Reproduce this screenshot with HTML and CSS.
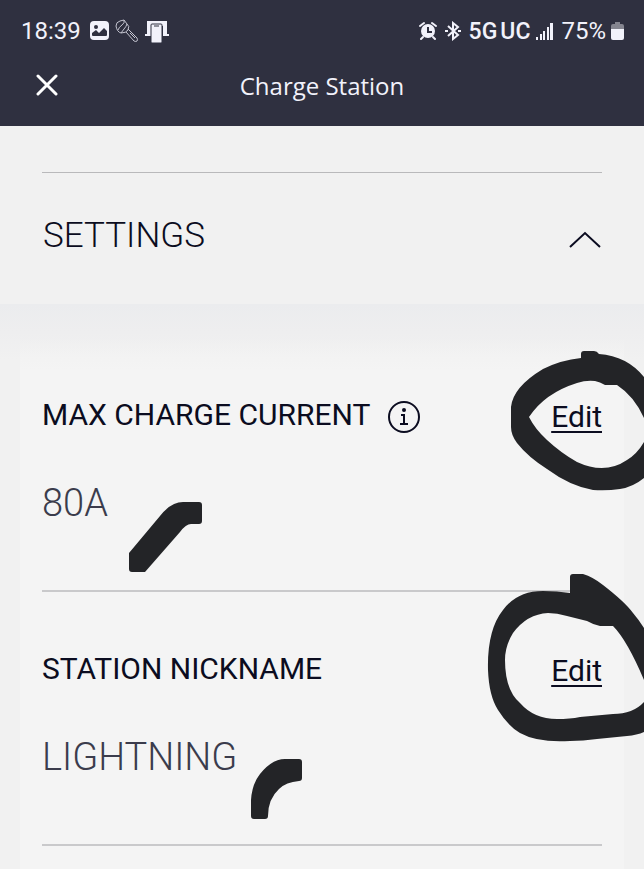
FILE: index.html
```html
<!DOCTYPE html>
<html lang="en">
<head>
    <meta charset="UTF-8">
    <meta name="viewport" content="width=device-width, initial-scale=1.0">
    <title>Charge Station</title>
    <link rel="stylesheet" href="styles.css">
</head>
<body>
    <header class="top">
        <div class="status-bar">
            <div class="status-group">
                <span class="clock">18:39</span>
                <svg width="19" height="20" viewBox="0 0 19 20">
                    <rect width="19" height="19" rx="4" fill="#f2f2fb"/>
                    <circle cx="6" cy="6" r="2" fill="#2f3040"/>
                    <path d="M2 14v-2l4-3 3 3 5-5 3 3v4q0 1-1 1H3q-1 0-1-1z" fill="#2f3040"/>
                </svg>
                <svg width="24" height="24" viewBox="0 0 24 24" fill="none" stroke="#c3c3cf" stroke-width="1">
                    <path d="M1 7q0-4 4-5l4-1 3 4q3 2 1 6-2 3-7 3-4-1-5-7z"/>
                    <path d="M9 1q1 3-2 5t-4 5M12 5q-1 3-3 5l-3 4M13 10l9 9q1 2 0 3t-3 0l-8-9M15 14l5 5"/>
                </svg>
                <svg width="24" height="24" viewBox="0 0 24 24">
                    <path d="M2 2h20v13h2v2h-6V7H6v10H0v-2h2z" fill="#f2f2fb"/>
                    <rect x="6" y="5" width="11" height="19" rx="1" fill="#f2f2fb" stroke="#2f3040"/>
                    <path d="M9 7h5" stroke="#2f3040"/>
                </svg>
            </div>
            <div class="status-group">
                <svg width="18" height="20" viewBox="0 0 18 20">
                    <circle cx="9" cy="10" r="7" fill="#f2f2fb"/>
                    <path d="M1 5l4-3M17 5l-4-3M4 16l-2 2M14 16l2 2" stroke="#f2f2fb" stroke-width="2" stroke-linecap="round"/>
                    <path d="M9 6v5h4" fill="none" stroke="#2f3040" stroke-width="2"/>
                </svg>
                <svg class="bluetooth" width="16" height="20" viewBox="0 0 16 20" fill="none" stroke="#f2f2fb" stroke-width="2">
                    <path d="M3 5l10 9-5 4V2l5 4-10 9"/>
                    <path d="M0 10h3M13 10h3"/>
                </svg>
                <span class="network"><span>5G</span><span>UC</span></span>
                <svg width="17" height="20" viewBox="0 0 17 20" fill="#f2f2fb">
                    <path d="M0 16h2v3H0zM4 13h2v6H4zM7 10h2v9H7zM11 6h2v13h-2zM14 2h3v17h-3z"/>
                </svg>
                <span class="battery">75%
                    <svg width="13" height="20" viewBox="0 0 13 20">
                        <path d="M4 1h5v2h2q2 0 2 2v4H0V5q0-2 2-2h2z" fill="#858590"/>
                        <path d="M0 8h13v9q0 2-2 2H2q-2 0-2-2z" fill="#f2f2fb"/>
                    </svg>
                </span>
            </div>
        </div>
        <div class="title-bar">
            <button class="close" type="button" aria-label="Close">
                <svg width="22" height="22" viewBox="0 0 22 22" stroke="#fff" stroke-width="3" stroke-linecap="round">
                    <path d="M2 2l18 18M20 2L2 20"/>
                </svg>
            </button>
            <h1>Charge Station</h1>
        </div>
    </header>

    <main>
        <section class="settings">
            <button class="settings-toggle" type="button" aria-expanded="true">
                SETTINGS
                <svg width="32" height="17" viewBox="0 0 32 17" fill="none" stroke="#0b0c20" stroke-width="2">
                    <path d="M1 16L16 2l15 14"/>
                </svg>
            </button>
        </section>

        <div class="panel">
            <div class="card">
                <section class="row">
                    <div class="row-head">
                        <h2>MAX CHARGE CURRENT</h2>
                        <button class="info" type="button" aria-label="About max charge current">
                            <svg width="32" height="32" viewBox="0 0 32 32" fill="none" stroke="#0b0c20" stroke-width="2">
                                <circle cx="16" cy="16" r="15"/>
                                <path d="M13 14h3v9M12 23h8"/>
                                <circle cx="16" cy="9" r="1"/>
                            </svg>
                        </button>
                        <a class="edit" href="#">Edit</a>
                    </div>
                    <p class="value">80A</p>
                    <!-- marker strokes -->
                    <svg class="ink ring-top" width="134" height="142" viewBox="510 350 134 142">
                        <path d="M581 358V354Q581 351 584 351H594Q597 351 599 354Q627 356 644 377V418Q634 396 617 385H605Q600 382 595 381Q586 380 577 383Q545 393 529 417Q535 429 547 440Q561 453 577 462Q605 475 627 460Q637 454 644 442V478Q633 487 620 489Q607 491 593 490Q570 486 547 469Q528 457 517 443Q511 435 511 427V407Q513 387 543 369Q561 360 581 358Z"/>
                    </svg>
                    <svg class="ink dash-top" width="74" height="72" viewBox="129 501 74 72">
                        <path d="M129 553L160 516Q171 502 183 502H199Q202 502 202 505V521Q202 524 199 524H191Q186 524 180 532L145 572H132Q129 572 129 569Z"/>
                    </svg>
                </section>

                <section class="row">
                    <div class="row-head">
                        <h2>STATION NICKNAME</h2>
                        <a class="edit" href="#">Edit</a>
                    </div>
                    <p class="value">LIGHTNING</p>
                    <svg class="ink ring-bottom" width="158" height="170" viewBox="486 573 158 170">
                        <path d="M570 593V577Q570 574 573 574H583Q593 577 603 585Q625 602 633 613Q639 620 644 628V680Q627 640 613 626H600Q594 625 587 621L567 616Q557 613 548 613Q527 614 513 633Q505 646 505 660Q505 690 520 703Q534 719 557 719Q570 719 580 717L613 714Q633 714 644 702V732Q637 735 627 736L597 739Q583 741 570 741Q538 743 520 733Q508 726 498 710Q489 696 488 670Q487 630 503 610Q517 591 543 591Q557 591 570 593Z"/>
                    </svg>
                    <svg class="ink dash-bottom" width="52" height="61" viewBox="251 758 52 61">
                        <path d="M251 800Q252 784 260 774Q272 759 285 759H299Q302 759 302 762V778Q302 781 299 781Q286 782 279 789Q268 799 268 816Q268 819 265 819H254Q251 819 251 816Z"/>
                    </svg>
                </section>
            </div>
        </div>
    </main>
</body>
</html>
```

FILE: styles.css
```css
* {
    box-sizing: border-box;
}
body {
    font-family: Roboto, "Liberation Sans", sans-serif;
    background: #f1f1f1;
    color: #0b0c20;
    margin: 0;
    min-height: 100vh;
    display: flex;
    flex-direction: column;
}
h1, h2, p {
    margin: 0;
    font-weight: normal;
}
svg {
    display: block;
    flex-shrink: 0;
}
button {
    background: none;
    border: none;
    padding: 0;
    color: inherit;
    font-family: inherit;
    cursor: pointer;
}

/* header */
.top {
    background: #2f3040;
    color: #f2f2fb;
    padding-bottom: 18px;
}
.status-bar {
    display: flex;
    justify-content: space-between;
    align-items: center;
    height: 62px;
    padding: 0 20px 0 21px;
    font-size: 24px;
}
.status-group {
    display: flex;
    align-items: center;
    gap: 6px;
}
.clock {
    margin-right: 3px;
}
.bluetooth {
    margin: 0 2px;
}
.network {
    display: flex;
    gap: 3px;
    font-size: 23px;
    font-weight: 500;
}
.battery {
    display: flex;
    align-items: center;
    gap: 5px;
    margin-left: 2px;
}
.title-bar {
    display: grid;
    grid-template-columns: 1fr auto 1fr;
    align-items: center;
    height: 46px;
    padding: 0 36px;
}
.close {
    justify-self: start;
}
.title-bar h1 {
    font-family: "Open Sans", sans-serif;
    font-size: 24px;
}

/* settings */
main {
    flex: 1;
    display: flex;
    flex-direction: column;
}
.settings {
    padding: 46px 42px 0;
}
.settings-toggle {
    display: flex;
    justify-content: space-between;
    align-items: center;
    width: 100%;
    padding: 41px 1px 46px;
    border-top: 1px solid #b9b9bb;
    font-size: 35px;
    font-weight: 300;
    line-height: 44px;
}
.settings-toggle svg {
    margin-top: 6px;
}
.panel {
    flex: 1;
    display: flex;
    padding: 34px 20px 0;
    background: linear-gradient(#ebecee, #eeeeef 28px, #f1f1f1 56px);
}
.card {
    flex: 1;
    padding: 0 22px;
    background: linear-gradient(rgba(244, 244, 244, 0), #f4f4f4 32px);
}
.row {
    position: relative;
    padding: 57px 0 65px;
    border-bottom: 2px solid #c9c9cb;
}
.row-head {
    display: flex;
    align-items: center;
    margin-bottom: 46px;
    font-size: 30px;
    line-height: 36px;
}
.row-head h2 {
    font-size: 30px;
}
.info {
    margin-left: 18px;
    padding-top: 4px;
}
.edit {
    margin-left: auto;
    padding-top: 4px;
    color: inherit;
    text-decoration-thickness: 2px;
    text-underline-offset: 4px;
}
.value {
    color: #3b3c4c;
    font-size: 38px;
    font-weight: 300;
    line-height: 44px;
}

/* marker strokes over the rows */
.ink {
    position: absolute;
    fill: #232427;
    pointer-events: none;
}
.ring-top {
    top: 12px;
    right: -42px;
}
.dash-top {
    top: 163px;
    left: 87px;
}
.ring-bottom {
    top: -19px;
    right: -42px;
}
.dash-bottom {
    top: 166px;
    left: 209px;
}
```
